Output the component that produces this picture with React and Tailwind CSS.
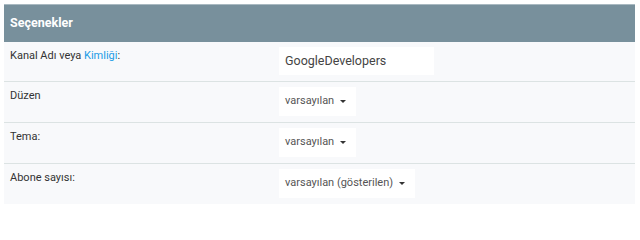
import React from 'react';

const Caret = () => (
  <svg width="6" height="3" viewBox="0 0 6 3" className="ml-[6px] shrink-0">
    <path d="M0 0h6L3 3z" fill="#333" />
  </svg>
);

const Select = ({ children }) => (
  <div className="h-[29px] bg-white flex items-center pl-[6px] pr-[10px] text-[11px] text-[#555]">
    <span>{children}</span>
    <Caret />
  </div>
);

const Row = ({ label, last, children }) => (
  <div className={`flex pt-[5px] pb-[6px] ${last ? '' : 'border-b border-[#dce3e3]'}`}>
    <div className="w-[275px] pl-[6px] -mt-[1px] text-[11px] leading-5 text-[#333]">{label}</div>
    <div>{children}</div>
  </div>
);

export default function App() {
  return (
    <div className="bg-white p-[4px] h-[210px]" style={{ fontFamily: 'Roboto, "Liberation Sans", sans-serif' }}>
      <div className="w-[631px] bg-[#f8f9fb]">
        <div className="h-[38px] bg-[#78909c] border-t border-[#a9b9c1] flex items-center px-[6px] text-white text-[12.5px] font-bold">
          Seçenekler
        </div>
        <Row label={<>Kanal Adı veya <span className="text-[#1a9be6]">Kimliği</span>:</>}>
          <div className="h-[28px] w-[155px] bg-white flex items-center pl-[6px] text-[12.5px] text-[#444]">
            GoogleDevelopers
          </div>
        </Row>
        <Row label="Düzen">
          <Select>varsayılan</Select>
        </Row>
        <Row label="Tema:">
          <Select>varsayılan</Select>
        </Row>
        <Row label="Abone sayısı:" last>
          <Select>varsayılan (gösterilen)</Select>
        </Row>
      </div>
    </div>
  );
}
